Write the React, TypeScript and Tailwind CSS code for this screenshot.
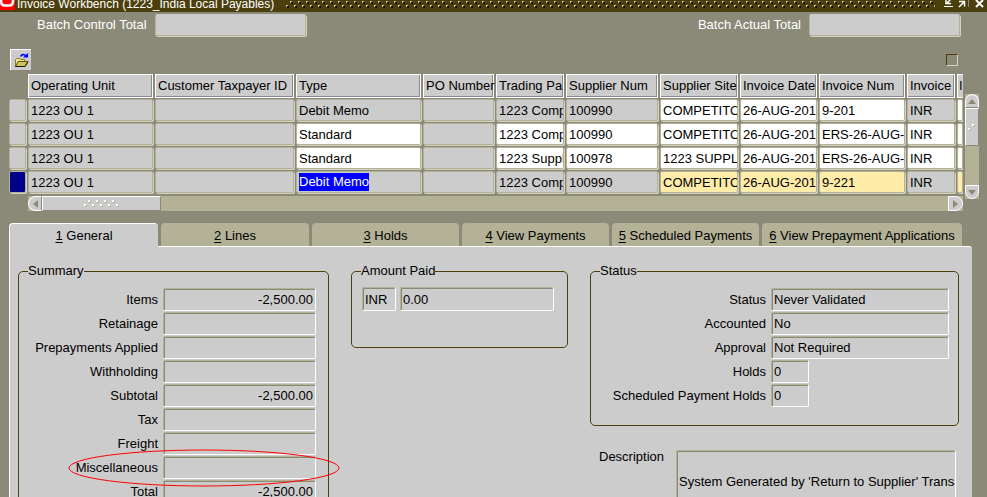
import React, { useState } from "react";

type Tone = "gray" | "white" | "gold";

interface Column {
  key: string;
  label: string;
  width: string;
}

const columns: Column[] = [
  { key: "unit", label: "Operating Unit", width: "w-[127px]" },
  { key: "taxpayer", label: "Customer Taxpayer ID", width: "w-[141px]" },
  { key: "type", label: "Type", width: "w-[127px]" },
  { key: "po", label: "PO Number", width: "w-[73px]" },
  { key: "partner", label: "Trading Pa", width: "w-[70px]" },
  { key: "supplier", label: "Supplier Num", width: "w-[94px]" },
  { key: "site", label: "Supplier Site", width: "w-[80px]" },
  { key: "date", label: "Invoice Date", width: "w-[79px]" },
  { key: "num", label: "Invoice Num", width: "w-[88px]" },
  { key: "currency", label: "Invoice", width: "w-[50px]" },
  { key: "amount", label: "I", width: "w-[6px]" },
];

const tones: Record<Tone, string> = {
  gray: "bg-[#cccccc]",
  white: "bg-white",
  gold: "bg-[#ffeca8]",
};

interface Row {
  values: string[];
  tones: Tone[];
  current?: boolean;
}

const g: Tone = "gray";
const w: Tone = "white";
const y: Tone = "gold";

const rows: Row[] = [
  {
    values: ["1223 OU 1", "", "Debit Memo", "", "1223 Company", "100990", "COMPETITOR", "26-AUG-2013", "9-201", "INR", ""],
    tones: [g, g, g, g, g, g, w, w, w, g, w],
  },
  {
    values: ["1223 OU 1", "", "Standard", "", "1223 Company", "100990", "COMPETITOR", "26-AUG-2013", "ERS-26-AUG-13", "INR", ""],
    tones: [g, g, w, g, w, w, w, w, w, w, w],
  },
  {
    values: ["1223 OU 1", "", "Standard", "", "1223 Supplier", "100978", "1223 SUPPLIER", "26-AUG-2013", "ERS-26-AUG-13", "INR", ""],
    tones: [g, g, w, g, w, w, w, w, w, w, w],
  },
  {
    values: ["1223 OU 1", "", "Debit Memo", "", "1223 Company", "100990", "COMPETITOR", "26-AUG-2013", "9-221", "INR", ""],
    tones: [g, g, g, g, g, g, y, y, y, g, y],
    current: true,
  },
];

const tabs = [
  { key: "1", label: "General", size: "w-[149px]" },
  { key: "2", label: "Lines", size: "w-[148px]" },
  { key: "3", label: "Holds", size: "w-[147px]" },
  { key: "4", label: "View Payments", size: "w-[147px]" },
  { key: "5", label: "Scheduled Payments", size: "w-[147px]" },
  { key: "6", label: "View Prepayment Applications", size: "w-[200px]" },
];

const summary = [
  ["Items", "-2,500.00"],
  ["Retainage", ""],
  ["Prepayments Applied", ""],
  ["Withholding", ""],
  ["Subtotal", "-2,500.00"],
  ["Tax", ""],
  ["Freight", ""],
  ["Miscellaneous", ""],
  ["Total", "-2,500.00"],
];

const status = [
  ["Status", "Never Validated", "w-[178px]"],
  ["Accounted", "No", "w-[178px]"],
  ["Approval", "Not Required", "w-[178px]"],
  ["Holds", "0", "w-[38px]"],
  ["Scheduled Payment Holds", "0", "w-[38px]"],
];

const sunken =
  "rounded-[2px] border border-t-[#b3b196] border-l-[#b3b196] border-r-white border-b-white bg-[#cccccc] shadow-[inset_1px_1px_0_#8b8a78] outline-none";

const cell =
  "h-[22px] rounded-[2px] border border-[#b3b196] pl-[2px] shadow-[1px_1px_0_#d2d1c2] outline-none";

function BatchField({ id, label }: { id: string; label: string }) {
  return (
    <div className="flex items-center gap-2">
      <label htmlFor={id} className="text-white">
        {label}
      </label>
      <input
        id={id}
        readOnly
        className="h-[22px] w-[151px] rounded-[2px] border border-t-[#cccccc] border-r-[#b3b196] border-b-[#b3b196] border-l-[#b3b196] bg-[#cccccc] px-1 shadow-[1px_1px_0_#d2d1c2] outline-none"
      />
    </div>
  );
}

function Group({ title, className, children }: { title: string; className: string; children: React.ReactNode }) {
  return (
    <fieldset className={"min-w-0 rounded-[5px] border border-[#4c3f0e] " + className}>
      <legend className="ml-[9px] h-[14px] leading-[14px]">{title}</legend>
      {children}
    </fieldset>
  );
}

function TitleBar() {
  return (
    <header className="flex h-3 items-end overflow-hidden bg-[#4c3f0e] text-white">
      <svg width="15" height="10" viewBox="0 0 15 10" className="mb-[2px] shrink-0" aria-hidden="true">
        <rect width="15" height="10" fill="#ff0000" />
        <path d="M1 0v1q0 4.500 4 4.500h4q4 0 4-4.500V0" fill="none" stroke="#ffb0b0" strokeWidth="3" />
        <path d="M1 0v1q0 4.500 4 4.500h4q4 0 4-4.500V0" fill="none" stroke="#fff" strokeWidth="1.500" />
      </svg>
      <h1 className="ml-[2px] text-[12px] leading-4 whitespace-nowrap">Invoice Workbench (1223_India Local Payables)</h1>
      <svg height="8" className="mb-1 ml-3 min-w-0 flex-1" aria-hidden="true">
        <defs>
          <pattern id="grip" width="8" height="8" patternUnits="userSpaceOnUse">
            <path d="M1 6h2v2H1zM5 2h2v2H5z" fill="#151001" />
            <path d="M0 5h2v1H1v1H0zM4 1h2v1H5v1H4z" fill="#c9c5a0" />
          </pattern>
        </defs>
        <rect width="100%" height="8" fill="url(#grip)" />
      </svg>
      <svg width="43" height="12" viewBox="0 0 43 12" className="mr-px ml-2 shrink-0" fill="none" stroke="#fff" aria-hidden="true">
        <path d="M1 6.500h9" />
        <path d="M3 0v3.500h5M4 3l4-4" strokeWidth="1.500" />
        <path d="M16 7l5-5M16 1.500h5.500v5" strokeWidth="1.500" />
        <path d="M25.500 0v7" stroke="#8b8a78" />
        <path d="M33 7l7-7M33 0l7 7" strokeWidth="2" />
      </svg>
    </header>
  );
}

function Grip({ across }: { across: number }) {
  const dots = Array.from({ length: across }, (_, i) => i);
  return (
    <svg width={across * 4} height="9" aria-hidden="true">
      {dots.map((i) => (
        <g key={i}>
          <rect x={i * 4 + 1} y={i % 2 ? 2 : 6} width="2" height="2" fill="#b3b196" />
          <rect x={i * 4} y={i % 2 ? 1 : 5} width="2" height="2" fill="#fff" />
        </g>
      ))}
    </svg>
  );
}

export default function App() {
  const [active, setActive] = useState("1");
  const last = columns.length - 1;
  return (
    <div className="flex h-screen min-w-[960px] flex-col overflow-hidden bg-[#8b8a78] font-['Liberation_Sans',Arial,sans-serif] text-[13px] text-black">
      <TitleBar />

      <div className="flex justify-between pt-[2px] pr-[27px] pl-[37px]">
        <BatchField id="control" label="Batch Control Total" />
        <BatchField id="actual" label="Batch Actual Total" />
      </div>

      <div className="mt-[13px] flex items-center justify-between pr-[29px] pl-[10px]">
        <button type="button" aria-label="Open folder" className="flex h-[21px] w-[21px] items-center justify-center border-t border-l border-white bg-[#cccccc]">
          <svg width="15" height="15" viewBox="0 0 15 15" aria-hidden="true">
            <path d="M1.500 13V6.500l1-1h3l1 1h4v2" fill="#f0e68c" stroke="#8a7d1c" />
            <path d="M1.500 13.500L4 8.500h10L11 13.500z" fill="#d0c450" stroke="#5a5210" />
            <path d="M1.500 13.500h9.500L14 8.500" fill="none" stroke="#1a1802" />
            <path d="M6.500 3.500q1-2 3-2 1.500 0 2 1.500" fill="none" stroke="#0000ff" strokeWidth="1.500" />
            <path d="M9 4.500h5V0z" fill="#0000ff" />
          </svg>
        </button>
        <input
          type="checkbox"
          aria-label="Select all"
          className="h-3 w-3 appearance-none border border-t-[#4c3f0e] border-r-[#d2d1c2] border-b-[#d2d1c2] border-l-[#4c3f0e]"
        />
      </div>

      <div className="mt-1 flex pr-2 pl-[9px]">
        <div className="min-w-0 flex-1">
          <table className="w-full table-fixed border-collapse">
            <thead>
              <tr className="h-[25px]">
                <td className="w-[19px] p-0" />
                {columns.map((c, j) => (
                  <th key={c.key} className={"overflow-hidden p-0 text-left align-top font-normal " + c.width}>
                    <div
                      className={
                        "h-6 border border-white bg-[#cccccc] leading-[22px] whitespace-nowrap " +
                        (j === last ? "border-r-0 pl-px" : "mr-[2px] pl-[2px] shadow-[inset_-1px_-1px_0_#8b8a90]")
                      }
                    >
                      {c.label}
                    </div>
                  </th>
                ))}
              </tr>
            </thead>
            <tbody>
              {rows.map((r, i) => (
                <tr key={i} className="h-6">
                  <td className="p-0 align-top">
                    <button
                      type="button"
                      aria-label={"Record " + (i + 1)}
                      className={"block w-[17px] " + cell + (r.current ? " bg-[#00008b]" : " bg-[#cccccc]")}
                    />
                  </td>
                  {r.values.map((v, j) => (
                    <td key={j} className="overflow-hidden p-0 align-top">
                      {r.current && j === 2 ? (
                        <div className={"mr-[2px] flex items-center " + cell + " bg-[#cccccc]"}>
                          <span className="bg-[#0000ff] leading-[18px] text-white">{v}</span>
                        </div>
                      ) : (
                        <div className={j === last ? "" : "pr-[2px]"}>
                          <input
                            readOnly
                            aria-label={columns[j].label}
                            defaultValue={v}
                            className={"block w-full " + cell + " " + tones[r.tones[j]]}
                          />
                        </div>
                      )}
                    </td>
                  ))}
                </tr>
              ))}
            </tbody>
          </table>
          <div className="mt-px ml-[19px] flex h-[15px] bg-[#b3b196]">
            <button type="button" aria-label="Scroll left" className="flex w-[14px] items-center justify-center rounded-l-full border border-r-[#8b8a78] border-white bg-[#cccccc]">
              <svg width="5" height="8" aria-hidden="true"><path d="M5 0v8L0 4z" fill="#8b8a78" /></svg>
            </button>
            <div className="flex w-[119px] items-center justify-center border border-r-[#8b8a78] border-b-[#8b8a78] border-white bg-[#cccccc]">
              <Grip across={9} />
            </div>
            <div className="flex-1" />
            <button type="button" aria-label="Scroll right" className="flex w-[15px] items-center justify-center rounded-r-full border border-white bg-[#cccccc]">
              <svg width="5" height="8" aria-hidden="true"><path d="M0 0v8l5-4z" fill="#8b8a78" /></svg>
            </button>
          </div>
        </div>
        <div className="mt-5 mb-3 ml-[2px] flex w-[14px] flex-col bg-[#b3b196]">
          <button type="button" aria-label="Scroll up" className="flex h-[14px] items-center justify-center rounded-t-full border border-b-[#8b8a78] border-white bg-[#cccccc]">
            <svg width="8" height="5" aria-hidden="true"><path d="M0 5h8L4 0z" fill="#8b8a78" /></svg>
          </button>
          <div className="flex h-[38px] items-center justify-center border border-r-[#8b8a78] border-b-[#8b8a78] border-white bg-[#cccccc]">
            <Grip across={2} />
          </div>
          <div className="flex-1" />
          <button type="button" aria-label="Scroll down" className="flex h-[14px] items-center justify-center rounded-b-full border border-white bg-[#cccccc]">
            <svg width="8" height="5" aria-hidden="true"><path d="M0 0h8L4 5z" fill="#8b8a78" /></svg>
          </button>
        </div>
      </div>

      <div role="tablist" className="mt-3 mr-[25px] ml-[9px] flex h-[23px] shrink-0 gap-[3px]">
        {tabs.map((t) => (
          <button
            key={t.key}
            type="button"
            role="tab"
            aria-selected={t.key === active}
            onClick={() => setActive(t.key)}
            className={
              "grow rounded-t-[4px] whitespace-nowrap " +
              t.size +
              (t.key === active
                ? " relative -mb-px border-t border-l border-white bg-[#cccccc] pt-px"
                : " bg-[#b3b196] pt-[3px]")
            }
          >
            <span className="underline underline-offset-2">{t.key}</span> {t.label}
          </button>
        ))}
      </div>

      <main className="mr-[15px] ml-[9px] flex flex-1 items-start justify-between overflow-hidden rounded-tr-[3px] border-t border-l border-white bg-[#cccccc] pr-[13px] pl-2">
        <Group title="Summary" className="relative mt-[17px] w-[311px] pb-3">
          <div className="mt-[10px] flex flex-col gap-px pr-[12px]">
            {summary.map(([label, value]) => (
              <div key={label} className="flex items-center justify-end gap-[5px]">
                <label htmlFor={label}>{label}</label>
                <input id={label} readOnly defaultValue={value} className={"h-[23px] w-[153px] pr-[2px] text-right " + sunken} />
              </div>
            ))}
          </div>
          <svg width="272" height="38" className="pointer-events-none absolute top-[171px] left-[49px]" aria-hidden="true">
            <ellipse cx="136" cy="19" rx="135" ry="18" fill="none" stroke="#f00" />
          </svg>
        </Group>

        <Group title="Amount Paid" className="mt-[17px] h-[84px] w-[217px]">
          <div className="mt-[9px] ml-[10px] flex gap-1">
            <input aria-label="Currency" readOnly defaultValue="INR" className={"h-6 w-[34px] pl-[2px] " + sunken} />
            <input aria-label="Amount paid" readOnly defaultValue="0.00" className={"h-6 w-[154px] pl-[2px] " + sunken} />
          </div>
        </Group>

        <div className="mt-[17px] w-[369px]">
          <Group title="Status" className="h-[162px]">
            <div className="mt-[10px] flex flex-col gap-px pl-[9px]">
              {status.map(([label, value, size]) => (
                <div key={label} className="flex items-center gap-[5px]">
                  <label htmlFor={"status-" + label} className="w-[166px] text-right">
                    {label}
                  </label>
                  <input id={"status-" + label} readOnly defaultValue={value} className={"h-[23px] pl-[2px] " + size + " " + sunken} />
                </div>
              ))}
            </div>
          </Group>
          <div className="mt-6 flex items-start gap-3 pr-[3px] pl-[9px]">
            <label htmlFor="description" className="leading-[14px]">
              Description
            </label>
            <input
              id="description"
              readOnly
              defaultValue="System Generated by 'Return to Supplier' Transaction"
              className={"h-[62px] min-w-0 flex-1 pl-[2px] " + sunken}
            />
          </div>
        </div>
      </main>
    </div>
  );
}
